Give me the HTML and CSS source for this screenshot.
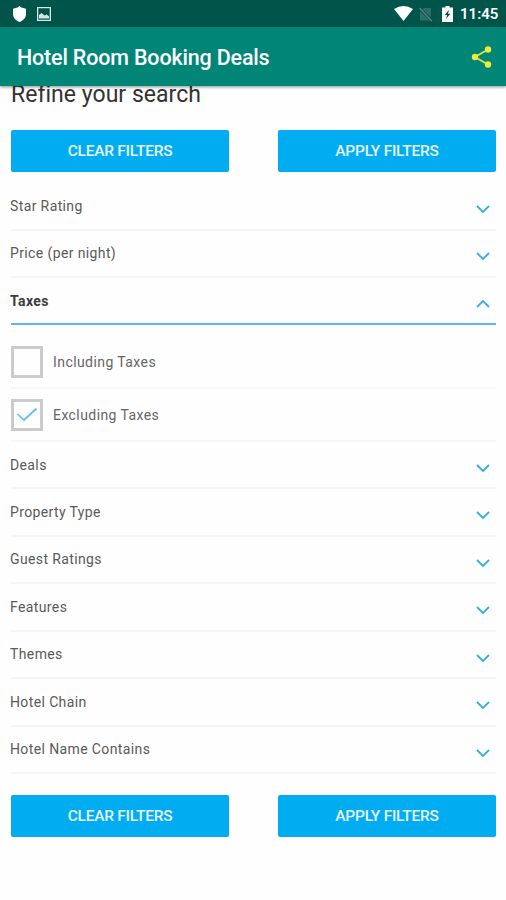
FILE: index.html
```html
<!DOCTYPE html>
<html lang="en">
<head>
<meta charset="utf-8">
<title>Hotel Room Booking Deals</title>
<link rel="stylesheet" href="styles.css">
</head>
<body>
<svg class="defs" width="0" height="0" aria-hidden="true">
  <symbol id="down" viewBox="0 0 16 10"><path d="M2 2L8 8L14 2"/></symbol>
  <symbol id="up" viewBox="0 0 16 10"><path d="M2 8L8 2L14 8"/></symbol>
</svg>
<div class="status">
  <svg class="shield" viewBox="0 0 14 16"><path d="M7 0L9 1.6L13.5 2.7V8C13.5 12 10.500 14.500 7 16C3.500 14.500.5 12 .5 8V2.700L5 1.600Z"/></svg>
  <svg class="photo" viewBox="0 0 14 14"><path fill-rule="evenodd" d="M0 0H14V14H0ZM1.300 1.300V12.700H12.700V1.300ZM2 11.500V8L4.500 6L7.500 8.500L9.500 7.500L12 9.300V11.500Z"/></svg>
  <span class="spacer"></span>
  <svg class="wifi" viewBox="0 0 19 15"><path d="M0 3Q9.500-3 19 3L9.500 15Z"/></svg>
  <svg class="sim" viewBox="0 0 14 15"><path d="M5 1H12V10.500L3.500 2.500ZM1 4L11 13.500H1Z"/><path class="slash" d="M.6 1L13 14.300"/></svg>
  <svg class="battery" viewBox="0 0 11 16"><path fill-rule="evenodd" d="M3.500 0H7.500V1.500H11V16H0V1.500H3.500ZM7 3.800L2.700 9H5L4 13L8.300 7.800H6Z"/></svg>
  <span class="clock">11:45</span>
</div>
<header class="appbar">
  <h1>Hotel Room Booking Deals</h1>
  <svg class="share" viewBox="0 0 20 22"><path d="M16.500 3.500L3.500 11L16.500 18.500"/><circle cx="16.500" cy="3.500" r="3.200"/><circle cx="3.500" cy="11" r="3.200"/><circle cx="16.500" cy="18.500" r="3.200"/></svg>
</header>
<main>
  <h2>Refine your search</h2>
  <div class="actions"><button>CLEAR FILTERS</button><button>APPLY FILTERS</button></div>
  <div class="filters">
    <div class="row upper"><span>Star Rating</span><svg><use href="#down"/></svg></div>
    <div class="row upper"><span>Price (per night)</span><svg><use href="#down"/></svg></div>
    <div class="row open"><span>Taxes</span><svg><use href="#up"/></svg></div>
    <div class="option first"><i class="box"></i><span>Including Taxes</span></div>
    <div class="option"><i class="box"><svg viewBox="0 0 22 16"><path d="M1.500 7L8 13L20.500 1.500"/></svg></i><span>Excluding Taxes</span></div>
    <div class="row deals"><span>Deals</span><svg><use href="#down"/></svg></div>
    <div class="row"><span>Property Type</span><svg><use href="#down"/></svg></div>
    <div class="row"><span>Guest Ratings</span><svg><use href="#down"/></svg></div>
    <div class="row"><span>Features</span><svg><use href="#down"/></svg></div>
    <div class="row"><span>Themes</span><svg><use href="#down"/></svg></div>
    <div class="row"><span>Hotel Chain</span><svg><use href="#down"/></svg></div>
    <div class="row"><span>Hotel Name Contains</span><svg><use href="#down"/></svg></div>
  </div>
  <div class="actions bottom"><button>CLEAR FILTERS</button><button>APPLY FILTERS</button></div>
</main>
</body>
</html>
```
FILE: styles.css
```css
* { box-sizing: border-box; }
body { margin: 0; height: 900px; overflow: hidden; background: #fefefe; font-family: Roboto, sans-serif; }
svg { display: block; flex: none; }
.defs { display: none; }
.status { height: 27px; background: #00544a; display: flex; align-items: center; padding: 1px 7px 0 12px; fill: #fff; color: #fff; }
.shield { width: 15px; height: 16px; }
.photo { width: 14px; height: 14px; margin-left: 10px; fill: #d5e7e4; }
.spacer { flex: 1; }
.wifi { width: 19px; height: 15px; margin-top: -1px; }
.sim { width: 14px; height: 15px; margin-left: 6px; fill: #2c6f65; }
.slash { stroke: #4a877e; stroke-width: 1.3; }
.battery { width: 11px; height: 16px; margin: -1px 0 0 9px; }
.clock { width: 39px; margin-left: 7px; font-size: 15px; font-weight: 600; line-height: 20px; white-space: nowrap; }
.appbar { position: relative; z-index: 1; height: 59px; background: #008577; box-shadow: 0 1px 3px rgba(0,0,0,.45); display: flex; align-items: center; justify-content: space-between; padding: 0 14px 0 17px; }
h1 { margin: 2px 0 0; font-size: 21.5px; font-weight: 500; line-height: 28px; letter-spacing: -.18px; color: #fff; white-space: nowrap; }
.share { width: 21px; height: 22px; fill: #eeea35; stroke: none; }
.share path { fill: none; stroke: #d8e043; stroke-width: 2; }
main { padding: 0 10px 0 11px; }
h2 { margin: -6px 0 0; height: 50px; font-size: 23px; font-weight: 400; line-height: 30px; letter-spacing: .03px; color: #333; white-space: nowrap; }
.actions { display: flex; justify-content: space-between; }
button { width: 218px; height: 42px; padding: 0; border: 0; border-radius: 2px; background: #02acf1; color: #e8f8ff; font: 500 15.5px/42px Roboto, sans-serif; letter-spacing: -.25px; }
.filters { padding-top: 12px; }
.row { height: 47.5px; border-bottom: 2px solid #f5f5f5; display: flex; align-items: center; justify-content: space-between; padding-right: 5px; font-size: 14px; letter-spacing: .38px; color: #5a5a5a; }
.row.upper { height: 47px; padding-bottom: 2px; }
.row > span { margin-left: -1px; }
.row > svg { width: 16px; height: 10px; margin-top: 7px; fill: none; stroke: #35ade8; stroke-width: 1.8; }
.row.open { height: 47px; border-color: #62b6ee; font-weight: 700; color: #3c3c3c; }
.option { height: 53px; border-bottom: 2px solid #f7f7f7; display: flex; align-items: center; font-size: 14px; letter-spacing: .42px; color: #666; }
.option.first { height: 64px; padding-top: 12px; }
.row.deals { height: 47px; }
.box { width: 32px; height: 32px; margin-right: 10px; border: 3px solid #cbcbcb; display: flex; align-items: center; justify-content: center; }
.box svg { width: 22px; height: 16px; fill: none; stroke: #5fc0ee; stroke-width: 1.7; }
.bottom { margin-top: 21px; }
```
